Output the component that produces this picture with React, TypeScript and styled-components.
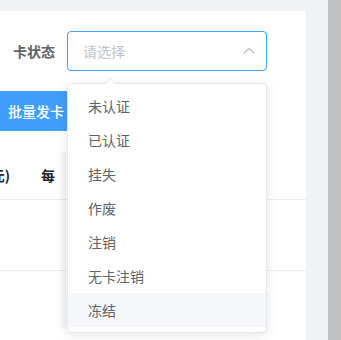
import React from 'react';
import styled, {createGlobalStyle} from 'styled-components';

const GlobalStyle = createGlobalStyle`
  html, body {
    margin: 0;
    padding: 0;
    overflow: hidden;
    background: #f0f2f5;
    font-family: "Noto Sans CJK SC", "Noto Sans", sans-serif;
  }
`;

const Screen = styled.div`
  display: flex;
  width: 341px;
  height: 340px;
  overflow: hidden;
`;

const Main = styled.div`
  width: 306px;
  padding-top: 11px;
  box-sizing: border-box;
`;

const Gutter = styled.div`
  width: 22px;
  background: #f0f2f5;
`;

const ScrollTrack = styled.div`
  width: 13px;
  background: #c1c1c1;
`;

const Card = styled.div`
  position: relative;
  background: #fff;
  height: 329px;
  padding-top: 20px;
  box-sizing: border-box;
`;

const FormRow = styled.div`
  display: flex;
  align-items: center;
  height: 40px;
`;

const Label = styled.label`
  width: 67px;
  padding-right: 12px;
  box-sizing: border-box;
  text-align: right;
  font-size: 14px;
  font-weight: 700;
  color: #606266;
`;

const SelectBox = styled.div`
  width: 200px;
  height: 40px;
  box-sizing: border-box;
  border: 1px solid #409eff;
  border-radius: 4px;
  display: flex;
  align-items: center;
  justify-content: space-between;
  padding: 0 10px 0 15px;
  font-size: 14px;
  color: #c0c4cc;
`;

const ButtonRow = styled.div`
  margin-top: 20px;
  display: flex;
`;

const PrimaryButton = styled.button`
  width: 90px;
  height: 40px;
  border: none;
  background: #409eff;
  color: #fff;
  font-family: inherit;
  font-size: 14px;
  font-weight: 500;
  text-align: left;
  padding: 0 0 0 8px;
`;

const Table = styled.div`
  position: relative;
  margin-top: 20px;
  height: 178px;
  overflow: hidden;
`;

const HeaderRow = styled.div`
  display: flex;
  height: 48px;
  align-items: center;
  border-bottom: 1px solid #ebeef5;
`;

const BodyRow = styled.div`
  height: 70px;
  border-bottom: 1px solid #ebeef5;
`;

const HeadCell = styled.div<{$w: number; $end?: boolean}>`
  width: ${p => p.$w}px;
  box-sizing: border-box;
  flex-shrink: 0;
  display: flex;
  justify-content: ${p => (p.$end ? 'flex-end' : 'flex-start')};
  overflow: hidden;
  white-space: nowrap;
  font-size: 14px;
  font-weight: 700;
  color: #1f2329;
  padding-left: ${p => (p.$end ? 0 : 31)}px;
`;

const FixedRight = styled.div`
  position: absolute;
  top: 0;
  left: 66px;
  right: 0;
  bottom: 0;
  background: #fff;
  box-shadow: 0 0 10px rgba(0, 0, 0, 0.12);
`;

const Dropdown = styled.div`
  position: absolute;
  left: 67px;
  top: 72px;
  width: 200px;
  box-sizing: border-box;
  background: #fff;
  border: 1px solid #e4e7ed;
  border-radius: 4px;
  box-shadow: 0 2px 12px 0 rgba(0, 0, 0, 0.1);
  padding: 5px 0;
  z-index: 2;
`;

const Arrow = styled.div`
  position: absolute;
  top: -6px;
  left: 36px;
  width: 0;
  height: 0;
  border-left: 6px solid transparent;
  border-right: 6px solid transparent;
  border-bottom: 6px solid #e4e7ed;
  &::after {
    content: '';
    position: absolute;
    left: -5px;
    top: 1px;
    border-left: 5px solid transparent;
    border-right: 5px solid transparent;
    border-bottom: 5px solid #fff;
  }
`;

const Option = styled.div<{$hover?: boolean}>`
  height: 34px;
  line-height: 34px;
  padding: 0 20px;
  font-size: 14px;
  color: #606266;
  background: ${p => (p.$hover ? '#f5f7fa' : '#fff')};
`;

const options = ['未认证', '已认证', '挂失', '作废', '注销', '无卡注销', '冻结'];

const ChevronUp = () => (
  <svg width="14" height="14" viewBox="0 0 14 14" fill="none">
    <path d="M1.5 9.5 L7 4.5 L12.5 9.5" stroke="#c0c4cc" strokeWidth="1.3" />
  </svg>
);

const App: React.FC = () => (
  <Screen>
    <GlobalStyle />
    <Main>
      <Card>
        <FormRow>
          <Label>卡状态</Label>
          <SelectBox>
            <span>请选择</span>
            <ChevronUp />
          </SelectBox>
        </FormRow>
        <ButtonRow>
          <PrimaryButton>批量发卡</PrimaryButton>
        </ButtonRow>
        <Table>
          <HeaderRow>
            <HeadCell $w={10} $end>面值(元)</HeadCell>
            <HeadCell $w={45}>每张面值</HeadCell>
          </HeaderRow>
          <BodyRow />
          <BodyRow />
          <FixedRight>
            <HeaderRow />
            <BodyRow />
            <BodyRow />
          </FixedRight>
        </Table>
        <Dropdown>
          <Arrow />
          {options.map((o, i) => (
            <Option key={o} $hover={i === options.length - 1}>{o}</Option>
          ))}
        </Dropdown>
      </Card>
    </Main>
    <Gutter />
    <ScrollTrack />
  </Screen>
);

export default App;
